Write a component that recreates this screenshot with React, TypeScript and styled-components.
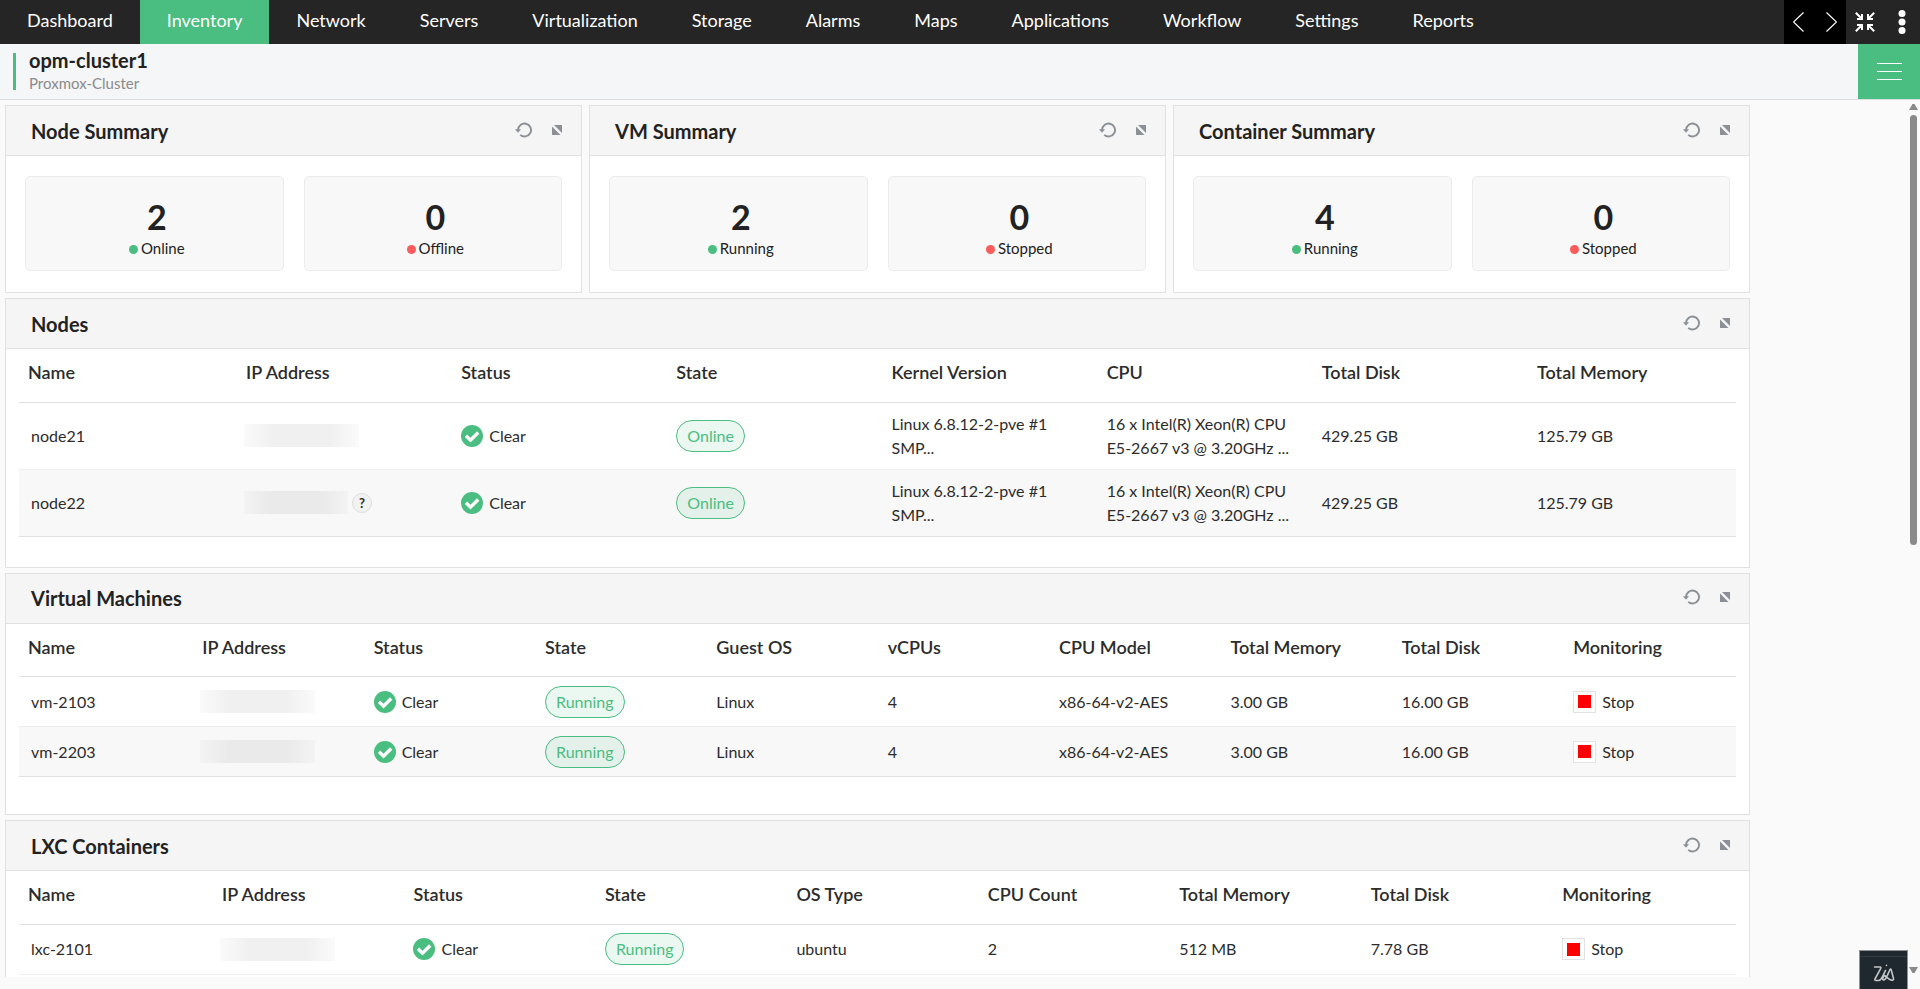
import React from "react";
import styled, { createGlobalStyle, css } from "styled-components";

const GlobalStyle = createGlobalStyle`
  *, *::before, *::after { box-sizing: border-box; }
  html, body, #root { height: 100%; }
  body {
    margin: 0;
    background: #fafafa;
    color: #222;
    font-family: Lato, "Open Sans", sans-serif;
    font-size: 16px;
    line-height: 24px;
  }
  button { font: inherit; color: inherit; border: 0; padding: 0; background: none; cursor: pointer; }
  a { color: inherit; text-decoration: none; }
  h1, h2, p, ul { margin: 0; padding: 0; font-weight: inherit; }
  svg { display: block; }
`;

const GREEN = "#4abd80";
const LINE = "#e0e1e2";

const Page = styled.div`
  display: flex;
  flex-direction: column;
  height: 100vh;
  overflow: hidden;
`;

const TopBar = styled.header`
  display: flex;
  flex: none;
  height: 44px;
  background: #252525;
  color: #fff;
`;

const Nav = styled.nav`
  display: flex;
  flex: 1;
  font-size: 18px;
`;

const NavLink = styled.a<{ $active?: boolean }>`
  display: flex;
  align-items: center;
  padding: 0 27px 4px;
  ${(p) => p.$active && css`background: ${GREEN};`}
`;

const Pager = styled.div`
  display: flex;
  gap: 4px;
  background: #000;
`;

const BarButton = styled.button`
  display: grid;
  place-items: center;
  width: 29px;
  height: 44px;
`;

const WideBarButton = styled(BarButton)`
  width: 37px;
`;

const SubHeader = styled.div`
  display: flex;
  flex: none;
  align-items: stretch;
  justify-content: space-between;
  height: 56px;
  background: #f4f6f8;
  border-bottom: 1px solid #dcdfe2;
`;

const DeviceTitle = styled.div`
  display: flex;
  flex-direction: column;
  justify-content: center;
  margin: 9px 0 9px 13px;
  padding-left: 13px;
  border-left: 3px solid ${GREEN};
`;

const DeviceName = styled.h1`
  font-size: 20px;
  line-height: 24px;
  font-weight: 700;
`;

const DeviceType = styled.p`
  padding-bottom: 2px;
  font-size: 15px;
  line-height: 22px;
  color: #8b8b8b;
`;

const MenuButton = styled.button`
  display: flex;
  flex-direction: column;
  align-items: center;
  justify-content: center;
  gap: 7px;
  width: 62px;
  background: ${GREEN};
`;

const MenuLine = styled.span`
  width: 25px;
  height: 1px;
  background: #fff;
`;

const Viewport = styled.div`
  display: flex;
  flex: 1;
  min-height: 0;
  padding-left: 5px;
`;

const Main = styled.main`
  flex: 1;
  min-width: 0;
  margin-bottom: 12px;
  overflow: hidden;
`;

const Board = styled.div`
  display: flex;
  flex-direction: column;
  gap: 5px;
  width: 91.75%;
  padding-top: 5px;
`;

const SummaryRow = styled.div`
  display: grid;
  grid-template-columns: repeat(3, 1fr);
  gap: 7px;
`;

const Panel = styled.section`
  background: #fff;
  border: 1px solid ${LINE};
`;

const PanelHead = styled.div`
  display: flex;
  align-items: center;
  gap: 20px;
  height: 50px;
  padding: 0 19px 2px 25px;
  background: #f5f5f5;
  border-bottom: 1px solid ${LINE};
`;

const PanelTitle = styled.h2`
  flex: 1;
  padding-top: 2px;
  font-size: 20px;
  font-weight: 700;
`;

const StatRow = styled.div`
  display: grid;
  grid-template-columns: 1fr 1fr;
  gap: 20px;
  padding: 20px 19px 21px;
`;

const StatCard = styled.div`
  display: flex;
  flex-direction: column;
  align-items: center;
  padding: 20px 0 10px 5px;
  background: #f8f8f8;
  border: 1px solid #ebebeb;
  border-radius: 5px;
`;

const StatValue = styled.strong`
  font-size: 34px;
  line-height: 39px;
  font-weight: 700;
`;

const StatLabel = styled.span`
  display: flex;
  align-items: center;
  gap: 3px;
  font-size: 15px;
`;

const Dot = styled.i<{ $bad?: boolean }>`
  width: 9px;
  height: 9px;
  margin-top: 2px;
  border-radius: 50%;
  background: ${(p) => (p.$bad ? "#fc5c5c" : GREEN)};
`;

const TableBody = styled.div<{ $bottom: number }>`
  padding: 0 13px ${(p) => p.$bottom}px;
`;

const Table = styled.table`
  width: 100%;
  table-layout: fixed;
  border-collapse: collapse;
  color: #2c2c2c;
`;

const Th = styled.th`
  height: 53px;
  padding: 0 0 6px 9px;
  border-bottom: 1px solid ${LINE};
  font-size: 18px;
  font-weight: 600;
  text-align: left;
`;

const Row = styled.tr<{ $tall?: boolean }>`
  height: ${(p) => (p.$tall ? 67 : 50)}px;
  border-bottom: 1px solid #eee;
  &:nth-child(even) { background: #f8f8f8; border-bottom-color: ${LINE}; }
`;

const Td = styled.td`
  padding: 0 0 0 9px;
  &:first-child { padding-left: 12px; }
`;

const Inline = styled.span<{ $gap: number }>`
  display: flex;
  align-items: center;
  gap: ${(p) => p.$gap}px;
`;

const Pill = styled.span`
  display: inline-block;
  padding: 3px 10px;
  border: 1px solid ${GREEN};
  border-radius: 16px;
  background: rgba(74, 189, 128, 0.11);
  color: ${GREEN};
`;

const Redacted = styled.div<{ $wide?: boolean }>`
  width: ${(p) => (p.$wide ? 115 : 104)}px;
  height: 23px;
  margin-left: -2px;
  background: linear-gradient(90deg, rgba(0,0,0,0.02), rgba(0,0,0,0.06) 25%, rgba(0,0,0,0.06) 75%, rgba(0,0,0,0.02));
`;

const Hint = styled.button`
  width: 20px;
  height: 20px;
  border: 1px solid #ddd;
  border-radius: 50%;
  background: #f2f2f2;
  font-size: 13px;
  line-height: 16px;
  font-weight: 700;
`;

const StopButton = styled.button`
  display: flex;
  align-items: center;
  gap: 6px;
`;

const StopBox = styled.span`
  display: grid;
  place-items: center;
  width: 23px;
  height: 22px;
  background: #fff;
  border: 1px solid #e2e2e2;
  &::before { content: ""; width: 13px; height: 13px; background: #f00; }
`;

const ScrollTrack = styled.div`
  display: flex;
  flex-direction: column;
  align-items: center;
  gap: 5px;
  flex: none;
  width: 13px;
  padding: 4px 0 16px;
  color: #8a8a8a;
`;

const Thumb = styled.div`
  width: 7px;
  height: calc(50% - 5px);
  border-radius: 4px;
  background: #8a8a8a;
`;

const ScrollEnd = styled.div`
  margin-top: auto;
`;

const Assistant = styled.button`
  position: fixed;
  right: 12px;
  bottom: 0;
  display: grid;
  place-items: center;
  width: 49px;
  height: 39px;
  padding-top: 6px;
  background: #20282f;
  border: 1px solid #8d9296;
  border-bottom: 0;
  box-shadow: inset 0 5px 0 #20282f, inset 0 6px 0 #343d44;
`;

const IconButton = styled.button`
  color: #8a9096;
`;

const RefreshIcon = () => (
  <svg width="17" height="16" viewBox="0 0 17 16" fill="none" stroke="currentColor" strokeWidth="1.9">
    <path d="M3 8.300V8a6.500 6.500 0 1 1 2.200 4.900" />
    <path d="M0 7.300h6L3 10.800z" fill="currentColor" stroke="none" />
  </svg>
);

const ExpandIcon = () => (
  <svg width="10" height="10" viewBox="0 0 10 10" fill="currentColor">
    <path d="M2 0H10V8z" />
    <path d="M0 1.500L8.500 10H0z" />
  </svg>
);

const CheckIcon = () => (
  <svg width="22" height="22" viewBox="0 0 22 22">
    <circle cx="11" cy="11" r="11" fill={GREEN} />
    <path d="M5 10.800l4.500 4.400 7.700-7.700" fill="none" stroke="#fff" strokeWidth="3.4" />
  </svg>
);

const Chevron = ({ right }: { right?: boolean }) => (
  <svg width="11" height="20" viewBox="0 0 11 20" fill="none" stroke="#fff" strokeWidth="1.2">
    <path d={right ? "M.5.5L10.5 10 .5 19.5" : "M10.5.5L.5 10l10 9.5"} />
  </svg>
);

const CollapseIcon = () => (
  <svg width="20" height="20" viewBox="0 0 20 20" fill="none" stroke="#fff" strokeWidth="2">
    <path d="M.8.8l6 6M2 7h5V2M19.200.8l-6 6M18 7h-5V2M.8 19.200l6-6M2 13h5v5M19.200 19.200l-6-6M18 13h-5v5" />
  </svg>
);

const KebabIcon = () => (
  <svg width="8" height="24" viewBox="0 0 8 24" fill="#fff">
    <circle cx="4" cy="3.500" r="3.500" />
    <circle cx="4" cy="12" r="3.500" />
    <circle cx="4" cy="20.500" r="3.500" />
  </svg>
);

const ZiaIcon = () => (
  <svg width="22" height="18" viewBox="0 0 22 18" fill="none" stroke="#c3c6c8" strokeWidth="1.600" strokeLinecap="round" strokeLinejoin="round">
    <path d="M1.500 3H7c1 0 1 .8.600 1.600L2 15c-.5 1 0 1.500 1 1.500h2.500C9 16.500 10 11 12.500 6.500" />
    <path d="M13.500 1.200v.3" />
    <path d="M11.500 11.500c-2 2-2.500 4.500-.8 4.500 2.500 0 4-6 6.300-10.500.5-.8 1-.5 1.200.2l2.300 8.800c.3 1.500-1 2-2.500 1.500-2.500-.8-4.500-3-6.500-4.500z" />
  </svg>
);

const Triangle = ({ down }: { down?: boolean }) => (
  <svg width="9" height="6" viewBox="0 0 9 6" fill="currentColor">
    <path d={down ? "M0 0h9L5.500 6h-2z" : "M0 6h9L5.500 0h-2z"} />
  </svg>
);

const PanelHeader = ({ title }: { title: string }) => (
  <PanelHead>
    <PanelTitle>{title}</PanelTitle>
    <IconButton aria-label={`Refresh ${title}`}><RefreshIcon /></IconButton>
    <IconButton aria-label={`Expand ${title}`}><ExpandIcon /></IconButton>
  </PanelHead>
);

const Status = () => <Inline $gap={6}><CheckIcon />Clear</Inline>;
const Monitoring = () => <StopButton><StopBox />Stop</StopButton>;

type Grid = {
  title: string;
  columns: string[];
  first: number;
  rest: number;
  rows: React.ReactNode[][];
  tall?: boolean;
  bottom: number;
};

const DataPanel = ({ title, columns, first, rest, rows, tall, bottom }: Grid) => (
  <Panel>
    <PanelHeader title={title} />
    <TableBody $bottom={bottom}>
      <Table aria-label={title}>
        <colgroup>
          {columns.map((c, i) => (
            <col key={c} width={i === 0 ? `${first}%` : i === columns.length - 1 ? undefined : `${rest}%`} />
          ))}
        </colgroup>
        <thead>
          <tr>{columns.map((c) => <Th key={c} scope="col">{c}</Th>)}</tr>
        </thead>
        <tbody>
          {rows.map((r, i) => (
            <Row key={i} $tall={tall}>{r.map((cell, j) => <Td key={j}>{cell}</Td>)}</Row>
          ))}
        </tbody>
      </Table>
    </TableBody>
  </Panel>
);

const kernel = <>Linux 6.8.12-2-pve #1<br />SMP...</>;
const cpu = <>16 x Intel(R) Xeon(R) CPU<br />E5-2667 v3 @ 3.20GHz ...</>;

const grids: Grid[] = [
  {
    title: "Nodes",
    columns: ["Name", "IP Address", "Status", "State", "Kernel Version", "CPU", "Total Disk", "Total Memory"],
    first: 12.7,
    rest: 12.53,
    tall: true,
    bottom: 30,
    rows: [
      ["node21", <Redacted $wide />, <Status />, <Pill>Online</Pill>, kernel, cpu, "429.25 GB", "125.79 GB"],
      ["node22", <Inline as="div" $gap={4}><Redacted /><Hint aria-label="More addresses">?</Hint></Inline>, <Status />, <Pill>Online</Pill>, kernel, cpu, "429.25 GB", "125.79 GB"],
    ],
  },
  {
    title: "Virtual Machines",
    columns: ["Name", "IP Address", "Status", "State", "Guest OS", "vCPUs", "CPU Model", "Total Memory", "Total Disk", "Monitoring"],
    first: 10.15,
    rest: 9.98,
    bottom: 37,
    rows: [
      ["vm-2103", <Redacted $wide />, <Status />, <Pill>Running</Pill>, "Linux", "4", "x86-64-v2-AES", "3.00 GB", "16.00 GB", <Monitoring />],
      ["vm-2203", <Redacted $wide />, <Status />, <Pill>Running</Pill>, "Linux", "4", "x86-64-v2-AES", "3.00 GB", "16.00 GB", <Monitoring />],
    ],
  },
  {
    title: "LXC Containers",
    columns: ["Name", "IP Address", "Status", "State", "OS Type", "CPU Count", "Total Memory", "Total Disk", "Monitoring"],
    first: 11.3,
    rest: 11.15,
    bottom: 37,
    rows: [
      ["lxc-2101", <Redacted $wide />, <Status />, <Pill>Running</Pill>, "ubuntu", "2", "512 MB", "7.78 GB", <Monitoring />],
    ],
  },
];

const summaries = [
  { title: "Node Summary", good: ["2", "Online"], bad: ["0", "Offline"] },
  { title: "VM Summary", good: ["2", "Running"], bad: ["0", "Stopped"] },
  { title: "Container Summary", good: ["4", "Running"], bad: ["0", "Stopped"] },
];

const navItems = [
  "Dashboard", "Inventory", "Network", "Servers", "Virtualization", "Storage",
  "Alarms", "Maps", "Applications", "Workflow", "Settings", "Reports",
];

export default function App() {
  return (
    <Page>
      <GlobalStyle />
      <TopBar>
        <Nav>
          {navItems.map((n) => (
            <NavLink key={n} href="#" $active={n === "Inventory"}>{n}</NavLink>
          ))}
        </Nav>
        <Pager>
          <BarButton aria-label="Previous tabs"><Chevron /></BarButton>
          <BarButton aria-label="Next tabs"><Chevron right /></BarButton>
        </Pager>
        <WideBarButton aria-label="Exit full screen"><CollapseIcon /></WideBarButton>
        <WideBarButton aria-label="More options"><KebabIcon /></WideBarButton>
      </TopBar>
      <SubHeader>
        <DeviceTitle>
          <DeviceName>opm-cluster1</DeviceName>
          <DeviceType>Proxmox-Cluster</DeviceType>
        </DeviceTitle>
        <MenuButton aria-label="Open menu"><MenuLine /><MenuLine /><MenuLine /></MenuButton>
      </SubHeader>
      <Viewport>
        <Main>
          <Board>
            <SummaryRow>
              {summaries.map((s) => (
                <Panel key={s.title}>
                  <PanelHeader title={s.title} />
                  <StatRow>
                    <StatCard>
                      <StatValue>{s.good[0]}</StatValue>
                      <StatLabel><Dot />{s.good[1]}</StatLabel>
                    </StatCard>
                    <StatCard>
                      <StatValue>{s.bad[0]}</StatValue>
                      <StatLabel><Dot $bad />{s.bad[1]}</StatLabel>
                    </StatCard>
                  </StatRow>
                </Panel>
              ))}
            </SummaryRow>
            {grids.map((g) => <DataPanel key={g.title} {...g} />)}
          </Board>
        </Main>
        <ScrollTrack>
          <Triangle />
          <Thumb />
          <ScrollEnd><Triangle down /></ScrollEnd>
        </ScrollTrack>
      </Viewport>
      <Assistant aria-label="Ask Zia"><ZiaIcon /></Assistant>
    </Page>
  );
}
